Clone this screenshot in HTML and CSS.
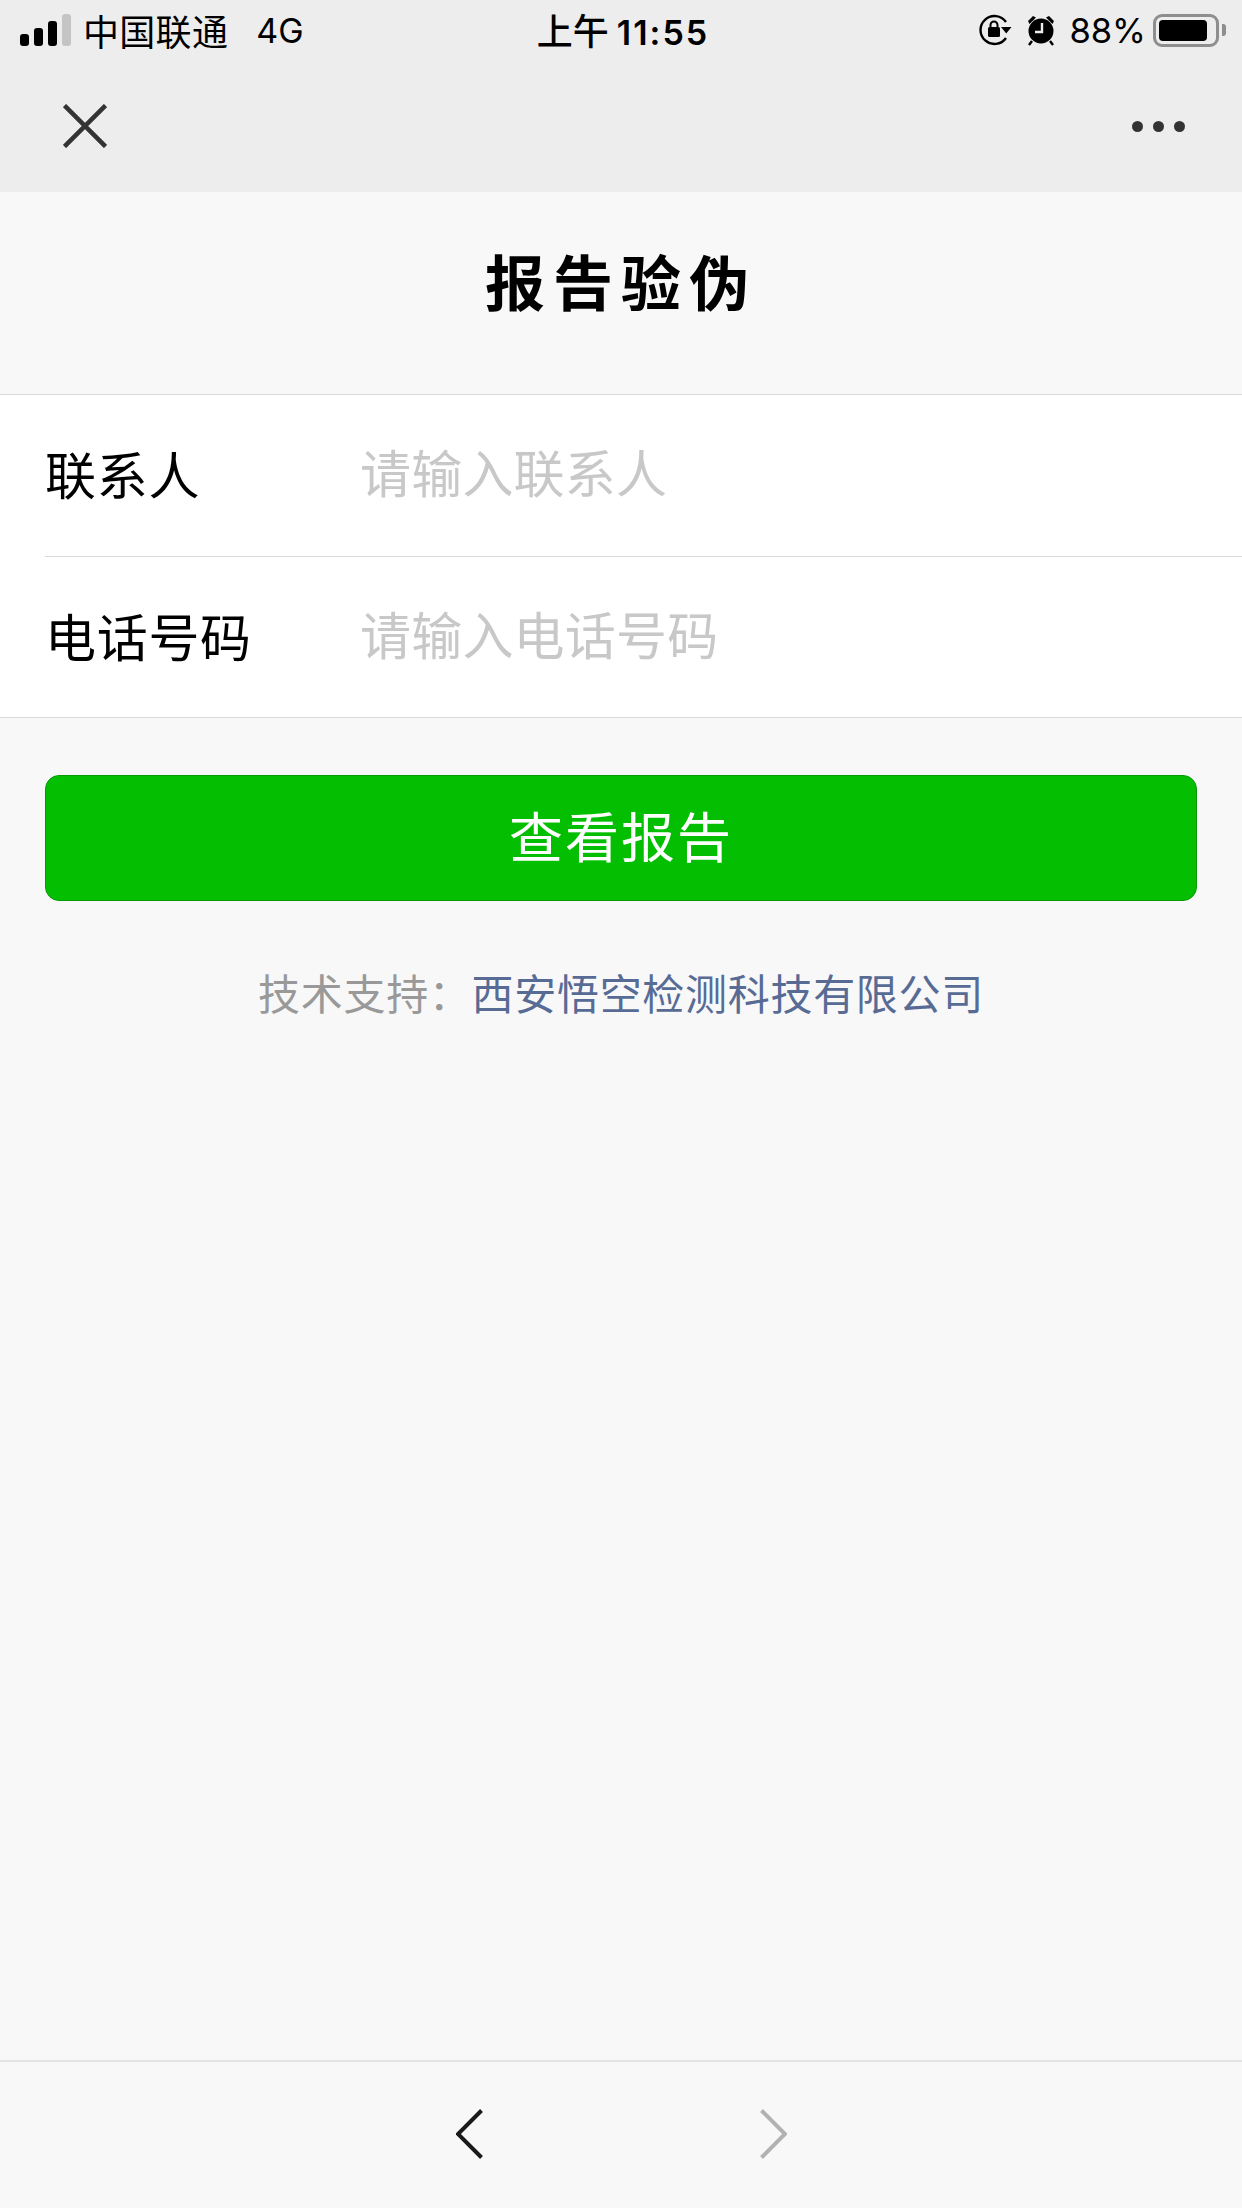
FILE: index.html
```html
<!DOCTYPE html>
<html lang="zh-CN">
<head>
    <meta charset="UTF-8">
    <title>报告验伪</title>
    <link rel="stylesheet" href="styles.css">
</head>
<body>
    <header class="top-bar">
        <div class="status-bar">
            <div class="status-left">
                <span class="signal">
                    <i class="sig sig-1"></i><i class="sig sig-2"></i><i class="sig sig-3"></i><i class="sig sig-4"></i>
                </span>
                <span class="carrier">中国联通</span>
                <span class="network">4G</span>
            </div>
            <div class="status-time">上午<b>11:55</b></div>
            <div class="status-right">
                <svg class="icon-lock" width="33" height="32" viewBox="0 0 33 32">
                    <path d="M27 8A14 14 0 1 0 27 24" fill="none" stroke="#000" stroke-width="2.4"/>
                    <path d="M22 13h10.500l-5.250 6.500z" fill="#000"/>
                    <rect x="9" y="13" width="12" height="10" rx="1.500" fill="#000"/>
                    <path d="M11.500 13.500v-2.500a3.500 3.500 0 0 1 7 0v2.500" fill="none" stroke="#000" stroke-width="2"/>
                </svg>
                <svg class="icon-alarm" width="28" height="32" viewBox="0 0 28 32">
                    <circle cx="14" cy="17" r="12.500" fill="#000"/>
                    <path d="M1 7l5-5 3 1.500-6.500 6.500zM27 7l-5-5-3 1.500 6.500 6.500z" fill="#000"/>
                    <path d="M5 27l-3 4M23 27l3 4" stroke="#000" stroke-width="2.4"/>
                    <path d="M15 9v9h-7" fill="none" stroke="#ededed" stroke-width="2.4"/>
                </svg>
                <span class="battery-pct">88%</span>
                <span class="battery"><i class="battery-fill"></i></span>
                <i class="battery-cap"></i>
            </div>
        </div>
        <div class="nav-bar">
            <svg width="44" height="44" viewBox="0 0 44 44">
                <path d="M1.500 1.500L42.500 42.500M42.500 1.500L1.500 42.500" stroke="#333" stroke-width="4.500" fill="none"/>
            </svg>
            <div class="dots"><i></i><i></i><i></i></div>
        </div>
    </header>

    <main class="content">
        <h1 class="title">报告验伪</h1>

        <form class="form">
            <label class="row">
                <span class="row-label">联系人</span>
                <input class="row-input" type="text" placeholder="请输入联系人">
            </label>
            <label class="row">
                <span class="row-label">电话号码</span>
                <input class="row-input" type="tel" placeholder="请输入电话号码">
            </label>
        </form>

        <div class="btn-wrap">
            <button class="btn" type="button">查看报告</button>
        </div>

        <p class="support">技术支持：<a href="#">西安悟空检测科技有限公司</a></p>
    </main>

    <footer class="toolbar">
        <svg width="28" height="50" viewBox="0 0 28 50">
            <path d="M25.500 1.500L2 25l23.500 23.500" fill="none" stroke="#1a1a1a" stroke-width="4"/>
        </svg>
        <svg width="28" height="50" viewBox="0 0 28 50">
            <path d="M2.500 1.500L26 25 2.500 48.500" fill="none" stroke="#b2b2b2" stroke-width="4"/>
        </svg>
    </footer>
</body>
</html>
```

FILE: styles.css
```css
* {
    box-sizing: border-box;
}

body {
    margin: 0;
    width: 1242px;
    height: 2208px;
    display: flex;
    flex-direction: column;
    background: #f8f8f8;
    color: #000;
    font-family: "Liberation Sans", "Noto Sans CJK SC", sans-serif;
    overflow: hidden;
}

/* Status + nav */
.top-bar {
    height: 192px;
    background: #ededed;
}

.status-bar {
    height: 60px;
    display: grid;
    grid-template-columns: 1fr auto 1fr;
    align-items: center;
    padding: 0 16px 0 20px;
    font-family: Inter, "Noto Sans CJK SC", sans-serif;
}

.status-left,
.status-right {
    display: flex;
    align-items: center;
}

.status-right {
    justify-content: flex-end;
}

.signal {
    display: flex;
    align-items: flex-end;
    gap: 5px;
    height: 32px;
    margin-right: 12px;
}

.sig {
    width: 9px;
    border-radius: 3px;
    background: #000;
}

.sig-1 { height: 12px; }
.sig-2 { height: 18px; }
.sig-3 { height: 25px; }
.sig-4 { height: 32px; background: #c4c4c4; }

.carrier {
    font-size: 36px;
    letter-spacing: 0.3px;
}

.network {
    font-size: 34px;
    margin-left: 28px;
}

.status-time {
    font-size: 36px;
    font-weight: 500;
    margin-top: -3px;
}

.status-time b {
    font-size: 34px;
    font-weight: 600;
    letter-spacing: 2px;
    margin-left: 8px;
}

.icon-alarm {
    margin-left: 15px;
}

.battery-pct {
    font-size: 34.500px;
    margin: 0 7px 0 14px;
}

.battery {
    width: 66px;
    height: 33px;
    border: 3px solid #8e8e8e;
    border-radius: 9px;
    padding: 3px;
    display: flex;
}

.battery-fill {
    width: 48px;
    background: #000;
    border-radius: 4px;
}

.battery-cap {
    width: 4px;
    height: 12px;
    margin-left: 3px;
    background: #8e8e8e;
    border-radius: 0 3px 3px 0;
}

.nav-bar {
    height: 132px;
    display: flex;
    align-items: center;
    justify-content: space-between;
    padding: 0 57px 0 63px;
}

.dots {
    display: flex;
    gap: 10px;
}

.dots i {
    width: 11px;
    height: 11px;
    border-radius: 50%;
    background: #333;
}

/* Main */
.content {
    flex: 1;
}

.title {
    margin: 0;
    height: 202px;
    display: flex;
    align-items: center;
    justify-content: center;
    font-size: 60px;
    font-weight: 700;
    letter-spacing: 8px;
    padding-bottom: 28px;
}

.form {
    background: #fff;
    border-top: 1px solid #d9d9d9;
    border-bottom: 1px solid #d9d9d9;
}

.row {
    height: 161px;
    margin-left: 45px;
    display: flex;
    align-items: center;
}

.row + .row {
    border-top: 1px solid #d9d9d9;
}

.row-label {
    width: 315px;
    font-size: 51px;
    letter-spacing: 0.7px;
    padding-bottom: 5px;
}

.row-input {
    flex: 1;
    border: none;
    outline: none;
    padding: 0;
    background: none;
    font: inherit;
    font-size: 51px;
    letter-spacing: 0.2px;
}

.row-input::placeholder {
    color: #c8c8c8;
    opacity: 1;
}

.btn-wrap {
    padding: 57px 45px 0;
}

.btn {
    display: block;
    width: 100%;
    height: 126px;
    padding: 0 0 7px;
    background: #04be02;
    border: 1px solid #069b05;
    border-radius: 14px;
    color: #fff;
    font: inherit;
    font-size: 54px;
    letter-spacing: 2px;
}

.support {
    margin: 60px 0 0;
    text-align: center;
    font-size: 42px;
    letter-spacing: 0.7px;
    color: #999;
}

.support a {
    color: #576b95;
    text-decoration: none;
}

/* Bottom toolbar */
.toolbar {
    height: 148px;
    border-top: 2px solid #e4e4e4;
    background: #f8f8f8;
    display: flex;
    align-items: center;
    justify-content: center;
    gap: 275px;
    padding-bottom: 2px;
}
```
